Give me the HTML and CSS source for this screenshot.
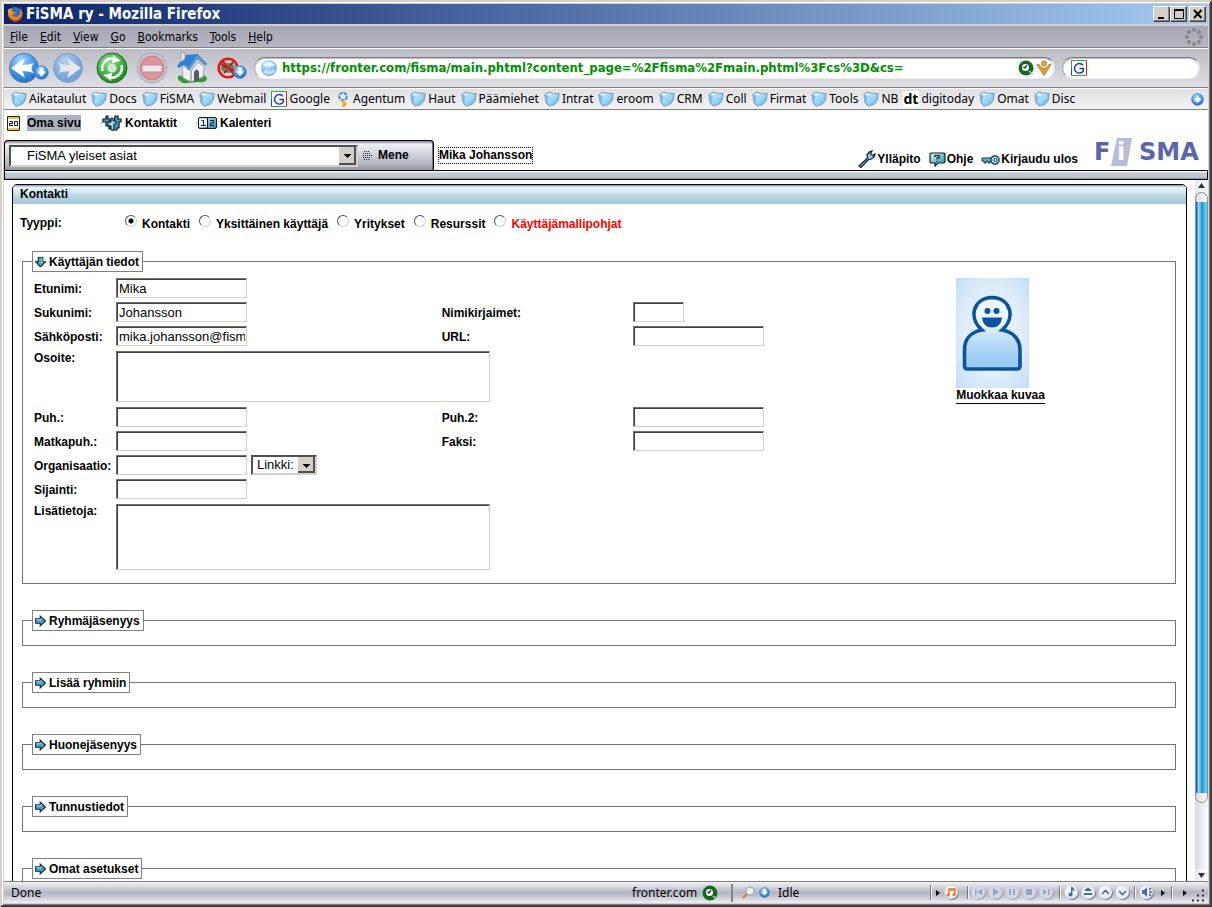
FILE: index.html
```html
<!DOCTYPE html>
<html lang="fi">
<head>
<meta charset="utf-8">
<title>FiSMA ry - Mozilla Firefox</title>
<link rel="stylesheet" href="styles.css">
</head>
<body>
<svg class="defs" aria-hidden="true">
  <defs>
    <radialGradient id="blueBall" cx=".4" cy=".25" r=".85"><stop offset="0" stop-color="#a8dcff"/><stop offset=".5" stop-color="#3f9be8"/><stop offset="1" stop-color="#1c62b8"/></radialGradient>
    <radialGradient id="greenBall" cx=".4" cy=".3" r=".8"><stop offset="0" stop-color="#8fe08a"/><stop offset=".6" stop-color="#35a83c"/><stop offset="1" stop-color="#137a1c"/></radialGradient>
    <linearGradient id="folder" x1="0" y1="0" x2="1" y2="1"><stop offset="0" stop-color="#b4e2fc"/><stop offset=".5" stop-color="#98d8fc"/><stop offset="1" stop-color="#58b0ec"/></linearGradient>
    <linearGradient id="teal" x1="0" y1="0" x2="1" y2="1"><stop offset="0" stop-color="#d8f2f8"/><stop offset="1" stop-color="#2888a8"/></linearGradient>
    <linearGradient id="body" x1="0" y1="0" x2="0" y2="1"><stop offset="0" stop-color="#d4e9fb"/><stop offset=".75" stop-color="#9ccbf3"/><stop offset="1" stop-color="#9ccbf3"/></linearGradient>
    <radialGradient id="photo" r=".7"><stop offset="0" stop-color="#f0f7fe"/><stop offset=".6" stop-color="#deedfb"/><stop offset="1" stop-color="#c0def8"/></radialGradient>
    <symbol id="i-folder" viewBox="0 0 16 16"><path d="M.8 3.500 4.500 1l4 1.200 6.700.3-.7 6.500-3.500 4.500-6 1.700-3-3.500z" fill="#74bdec" stroke="#8797a4" stroke-width=".8"/><path d="M4 5.500 8 4.500l6-.8-1 5-3 4-4.500 1.500-2-3z" fill="url(#folder)"/><path d="M1.500 3.700 4.500 1.700l4 1.200 5.500.3-9 1.800z" fill="#d8eefa"/></symbol>
    <symbol id="i-down" viewBox="0 0 16 16"><circle cx="8" cy="8" r="7.300" fill="url(#blueBall)" stroke="#5283bb" stroke-width=".8"/><path d="M6 3h4v4h3l-5 5.500L3 7h3z" fill="#fff"/></symbol>
    <symbol id="i-right" viewBox="0 0 16 16"><circle cx="8" cy="8" r="7.300" fill="url(#blueBall)" stroke="#5283bb" stroke-width=".8"/><path d="M3 6h4V3l6 5-6 5v-3H3l2-2z" fill="#fff"/></symbol>
    <symbol id="i-g" viewBox="0 0 16 16"><path d="M0 0h16v16H0z" fill="#fff"/><path d="M.5 15.500V.5h15" fill="none" stroke="#2848c8"/><path d="M.5 8V.5H15.500" fill="none" stroke="#38a838"/><path d="M.5 8v7.500" stroke="#2848c8"/><path d="M15.500 1v14.500" stroke="#d82020"/><path d="M1 15.500h14" stroke="#38a838"/><path d="M12 5.200A4.800 4.800 0 1 0 12.300 11V8.500H8.500" fill="none" stroke="#1838a8" stroke-width="1.400"/></symbol>
    <symbol id="i-lock" viewBox="0 0 16 16"><circle cx="8" cy="8" r="7.500" fill="#107018"/><circle cx="7.500" cy="7.500" r="4.200" fill="#e8f4e8" stroke="#083c0c"/><path d="M7 8 9 5M7 8 5.500 7" stroke="#111" stroke-width="1.200"/><path d="m1 3 3-2M11 11l4 3.500" stroke="#c8c8c8" stroke-width="1.600"/></symbol>
    <symbol id="i-arrow" viewBox="0 0 12 12"><path d="M.7 3.500h5V.7L11.300 6l-5.600 5.300V8.500h-5z" fill="#45a9c8" stroke="#102838" stroke-width="1.200"/><path d="M1.500 4.500h5V3" fill="none" stroke="#a4dcec"/></symbol>
    <symbol id="i-ball" viewBox="0 0 16 16"><circle cx="8.800" cy="9" r="7" fill="#777c8e"/><circle cx="7.700" cy="7.700" r="7.200" fill="#e4edf8"/><circle cx="7" cy="6.500" r="5" fill="#f4f8fd"/></symbol>
    <symbol id="i-ballDim" viewBox="0 0 16 16"><circle cx="8.800" cy="9" r="7" fill="#a0a3b0"/><circle cx="7.700" cy="7.700" r="7.200" fill="#d3d7e2"/></symbol>
  </defs>
</svg>

<div class="window">
  <header class="title-bar">
    <svg class="ic16" viewBox="0 0 16 16"><circle cx="8" cy="8" r="7" fill="#356fc0"/><path d="M1 3Q0 12 6 15q8 2 9.500-6Q16 4 13 2q1 3 0 6-2 4-5 3-3-1-2-3l3-1-4-2 0-3Q2 3 1 3z" fill="#f08418"/><path d="M2 9q2 6 8 5 4-2 5-6-1 8-7 8-5-1-6-7z" fill="#c83c10"/><path d="M1.500 3 4 7l-1 2z" fill="#ffd050"/></svg>
    <h1>FiSMA ry - Mozilla Firefox</h1>
    <button class="win-btn" aria-label="Minimize"><svg viewBox="0 0 12 12"><path d="M2 9h6v2H2z"/></svg></button>
    <button class="win-btn" aria-label="Maximize"><svg viewBox="0 0 12 12"><path d="M1.500 2.500h9v8h-9z" fill="none" stroke="#000"/><path d="M1 1h10v2H1z"/></svg></button>
    <button class="win-btn close" aria-label="Close"><svg viewBox="0 0 12 12"><path d="m2 2 7.500 8M9.500 2 2 10" stroke="#000" stroke-width="1.900"/></svg></button>
  </header>
  <nav class="menu-bar">
    <button><u>F</u>ile</button><button><u>E</u>dit</button><button><u>V</u>iew</button><button><u>G</u>o</button><button><u>B</u>ookmarks</button><button><u>T</u>ools</button><button><u>H</u>elp</button>
    <svg class="throbber" viewBox="0 0 18 18" fill="#858588"><circle cx="9" cy="2" r="1.900"/><circle cx="14" cy="4" r="1.900"/><circle cx="16" cy="9" r="1.900"/><circle cx="14" cy="14" r="1.900"/><circle cx="9" cy="16" r="1.900"/><circle cx="4" cy="14" r="1.900"/><circle cx="2" cy="9" r="1.900"/><circle cx="4" cy="4" r="1.900"/></svg>
  </nav>
  <div class="tool-bar">
    <button class="tool back" aria-label="Back"><svg viewBox="0 0 42 32"><circle cx="16" cy="16" r="14.500" fill="url(#blueBall)" stroke="#4c7cb4"/><path d="M3 16 17 6 14.500 13Q20 13 26 11q-5 5 0 10-6-2-11.500-2L17 26z" fill="#fff"/><use href="#i-down" x="26" y="13" width="15" height="15"/></svg></button>
    <button class="tool fwd" aria-label="Forward"><svg viewBox="0 0 32 32" opacity=".55"><circle cx="16" cy="16" r="14.500" fill="url(#blueBall)" stroke="#4c7cb4"/><path d="M29 16 15 6l2.500 7Q12 13 6 11q5 5 0 10 6-2 11.500-2L15 26z" fill="#fff"/></svg></button>
    <button class="tool reload" aria-label="Reload"><svg viewBox="0 0 32 32"><circle cx="16" cy="16" r="15" fill="url(#greenBall)" stroke="#147020"/><g fill="none" stroke="#fff" stroke-width="2.500"><path d="M6.500 19A10 10 0 0 1 18 6.500"/><path d="M25.500 13A10 10 0 0 1 14 25.500"/></g><path d="m17 3 8 6-9 2zM15 29l-8-6 9-2z" fill="#fff"/><circle cx="16" cy="16" r="4.500" fill="#d8e8d8"/></svg></button>
    <button class="tool stop" aria-label="Stop"><svg viewBox="0 0 32 32"><circle cx="16" cy="16" r="15" fill="#c8c8d0" stroke="#a8a8b0"/><circle cx="16" cy="16" r="12" fill="#dc949c" stroke="#c88088"/><path d="M6 13h20v7H6z" fill="#e8e8ec" stroke="#cc868e"/></svg></button>
    <button class="tool home" aria-label="Home"><svg viewBox="0 0 32 32"><path d="M2 27q-1-5 5-3l4 3 4-3 5 3 5-3q5-2 6 3-2 4-8 3l-12 1q-6 1-9-4z" fill="#2e9c34"/><path d="m6 13 9 6v11l-8-4zM15 19l7-9 6 5-1 10-12 5z" fill="#eef0f4" stroke="#8a8e98" stroke-width=".7"/><path d="M18 20q3-5 5 0v8l-5 1z" fill="#555a64"/><path d="m1 14 9-11 12-1L12 15l-5-2-4 3z" fill="#2c82d8"/><path d="m21 2 10 10-2 1-8-7-8 12-2-2z" fill="#4ca0e8" stroke="#1c62ac" stroke-width=".6"/><path d="M5 1h4v6l-4 3z" fill="#e4e6ea" stroke="#888" stroke-width=".6"/></svg></button>
    <button class="tool fly" aria-label="Block"><svg viewBox="0 0 32 32"><ellipse cx="12" cy="16" rx="7" ry="5" fill="#8c7458"/><path d="m5 12 5 4M8 21l3-3M17 10l-3 4M19 19l-4-2" stroke="#46382c" stroke-width="1.500"/><circle cx="12" cy="16" r="9.300" fill="none" stroke="#e01818" stroke-width="2.600"/><path d="m6 9 13 14" stroke="#e01818" stroke-width="2.600"/><use href="#i-down" x="17" y="13" width="14" height="14"/></svg></button>
    <div class="url-box">
      <svg class="ic18" viewBox="0 0 18 18"><circle cx="9" cy="9" r="8" fill="url(#blueBall)" opacity=".6"/><path d="M3 6q6-6 12 0-6 3-12 0z" fill="#eef6ff"/><path d="m3 13 3-3 4 2 4-2 1 3q-6 5-12 0z" fill="#c4dcf4"/></svg>
      <input type="text" aria-label="Address" value="https://fronter.com/fisma/main.phtml?content_page=%2Ffisma%2Fmain.phtml%3Fcs%3D&amp;cs=">
      <svg class="ic16"><use href="#i-lock"/></svg>
      <svg class="ic16" viewBox="0 0 16 16"><circle cx="8" cy="3.500" r="2.600" fill="#e0a838" stroke="#a87414" stroke-width=".7"/><path d="m1 4.500 1.500-.5L6 8h4l3.500-4 1.500.5-4 6.500-3 4.500L5 11z" fill="#dca030" stroke="#a06c10" stroke-width=".7"/></svg>
    </div>
    <div class="search-box"><svg class="ic16"><use href="#i-g"/></svg><input type="text" aria-label="Search"></div>
  </div>
  <nav class="bookmarks">
    <a href="#"><svg><use href="#i-folder"/></svg>Aikataulut</a>
    <a href="#"><svg><use href="#i-folder"/></svg>Docs</a>
    <a href="#"><svg><use href="#i-folder"/></svg>FiSMA</a>
    <a href="#"><svg><use href="#i-folder"/></svg>Webmail</a>
    <a href="#"><svg><use href="#i-g"/></svg>Google</a>
    <a href="#"><svg viewBox="0 0 16 16"><circle cx="8" cy="5.500" r="3.600" fill="#fff" stroke="#4898e0" stroke-width="2.400" stroke-dasharray="3.500 .8"/><path d="M8 9v2q3 1 2 3l-3 1" fill="none" stroke="#e8b020" stroke-width="2.400"/></svg>Agentum</a>
    <a href="#"><svg><use href="#i-folder"/></svg>Haut</a>
    <a href="#"><svg><use href="#i-folder"/></svg>Päämiehet</a>
    <a href="#"><svg><use href="#i-folder"/></svg>Intrat</a>
    <a href="#"><svg><use href="#i-folder"/></svg>eroom</a>
    <a href="#"><svg><use href="#i-folder"/></svg>CRM</a>
    <a href="#"><svg><use href="#i-folder"/></svg>Coll</a>
    <a href="#"><svg><use href="#i-folder"/></svg>Firmat</a>
    <a href="#"><svg><use href="#i-folder"/></svg>Tools</a>
    <a href="#"><svg><use href="#i-folder"/></svg>NB</a>
    <a href="#"><span class="dt">dt</span>digitoday</a>
    <a href="#"><svg><use href="#i-folder"/></svg>Omat</a>
    <a href="#"><svg><use href="#i-folder"/></svg>Disc</a>
    <button class="more" aria-label="More"><svg><use href="#i-right"/></svg></button>
  </nav>

  <div class="page">
    <div class="top-links">
      <a href="#" class="current"><svg width="13" height="15" viewBox="0 0 13 15"><path d="M.5.5h12v14H.5z" fill="#fff" stroke="#222"/><path d="M1 1h11v2H1zM1 12h11v2H1z" fill="#f8c048"/><path d="M2.500 5.500h3v2h-3v2h3.500M7.500 5.500h3v4h-3z" fill="none" stroke="#111"/></svg><span>Oma sivu</span></a>
      <a href="#"><svg width="22" height="16" viewBox="0 0 22 16"><path d="M1 8h1" stroke="#555"/><path d="M6 1h2v3h3v2H9v2l2 1v5H9v-3H6V7H3V4h3zM15 1h3v3h3v3h-2v6h-2v2h-4v-4h-3V7h4z" fill="#4898b8" stroke="#0c1c28" stroke-width="1.200"/><path d="M11 3h2v3h3v3h-2v6h-3v-4H8V7h3z" fill="#98d4e8" stroke="#0c1c28"/></svg><span>Kontaktit</span></a>
      <a href="#"><svg width="21" height="14" viewBox="0 0 21 14"><path d="M0 7h1" stroke="#555"/><rect x="2.500" y="1.500" width="18" height="11" rx="1.500" fill="url(#teal)" stroke="#0c1c28"/><path d="M3 3h8v8H3z" fill="#e8f8fc"/><path d="M11.500 2v10M5.500 4.500h2v5M5 9.500h5M14 4.500h3.500v2.500h-3v2.500H18" fill="none" stroke="#0c1c28"/></svg><span>Kalenteri</span></a>
    </div>
    <div class="head-row">
      <form class="room-tab">
        <select class="room" aria-label="Huone"><option>FiSMA yleiset asiat</option></select>
        <button type="button" class="go"><svg width="10" height="10" viewBox="0 0 10 10"><path d="M1 .5h5M0 2.500h8M0 4.500h10M0 6.500h8M1 8.500h5" stroke="#222" stroke-dasharray="1 1"/></svg>Mene</button>
      </form>
      <a href="#" class="user">Mika Johansson</a>
      <div class="tools">
        <a href="#"><svg width="18" height="18" viewBox="0 0 18 18"><path d="M1 16 9.500 8 9 4.500 12 1.500l2-.5-1.500 2.500 2 2L17 4l-.5 2.500-3 2.500-3 .5L3 17.500z" fill="#8ccce0" stroke="#0c1c28" stroke-width="1.200"/></svg>Ylläpito</a>
        <a href="#"><svg width="17" height="15" viewBox="0 0 17 15"><path d="M2 1h13l1 1v8l-1 1H9l-3 3v-3H2l-1-1V2z" fill="url(#teal)" stroke="#0c1c28" stroke-width="1.200"/><path d="M6 5V3.500h4V6H8v1.500M8 9v1" fill="none" stroke="#0c1c28" stroke-width="1.200"/></svg>Ohje</a>
        <a href="#"><svg width="19" height="13" viewBox="0 0 19 13"><path d="M1 5h10v3H9v2H7V8H5v2H3V8H1z" fill="#68b4cc" stroke="#0c3448"/><circle cx="14" cy="7" r="4.200" fill="#a8d8e8" stroke="#0c3448" stroke-width="1.200"/><circle cx="14.500" cy="7" r="1.500" fill="#fff" stroke="#0c3448"/></svg>Kirjaudu ulos</a>
        <svg class="logo" width="110" height="28" viewBox="0 0 110 28"><path d="M23 0h15l-5 28H17z" fill="#b8bcdc"/><g class="logo-text"><text x="0" y="22">F</text><text x="45" y="22">SMA</text><text x="23" y="22" class="logo-i">i</text></g></svg>
      </div>
    </div>
    <div class="bar"></div>

    <div class="frame">
      <main class="panel">
        <h2>Kontakti</h2>
        <div class="types">
          <span class="types-title">Tyyppi:</span>
          <label><input type="radio" name="type" checked>Kontakti</label>
          <label><input type="radio" name="type">Yksittäinen käyttäjä</label>
          <label><input type="radio" name="type">Yritykset</label>
          <label><input type="radio" name="type">Resurssit</label>
          <label class="red"><input type="radio" name="type">Käyttäjämallipohjat</label>
        </div>
        <fieldset>
          <legend><svg class="turn"><use href="#i-arrow"/></svg>Käyttäjän tiedot</legend>
          <div class="form">
            <label class="c1" for="etunimi">Etunimi:</label><input class="c2" id="etunimi" type="text" value="Mika">
            <label class="c1" for="sukunimi">Sukunimi:</label><input class="c2" id="sukunimi" type="text" value="Johansson">
            <label class="c3" for="nimik">Nimikirjaimet:</label><input class="c4 short" id="nimik" type="text">
            <label class="c1" for="posti">Sähköposti:</label><input class="c2" id="posti" type="text" value="mika.johansson@fisma.fi">
            <label class="c3" for="url">URL:</label><input class="c4" id="url" type="text">
            <label class="c1 top" for="osoite">Osoite:</label><textarea id="osoite" class="small"></textarea>
            <label class="c1" for="puh">Puh.:</label><input class="c2" id="puh" type="text">
            <label class="c3" for="puh2">Puh.2:</label><input class="c4" id="puh2" type="text">
            <label class="c1" for="matka">Matkapuh.:</label><input class="c2" id="matka" type="text">
            <label class="c3" for="faksi">Faksi:</label><input class="c4" id="faksi" type="text">
            <label class="c1" for="org">Organisaatio:</label>
            <div class="c2 pair"><input id="org" type="text"><select class="link-select" aria-label="Linkki"><option>Linkki:</option></select></div>
            <label class="c1" for="sij">Sijainti:</label><input class="c2" id="sij" type="text">
            <label class="c1 top" for="lisa">Lisätietoja:</label><textarea id="lisa" class="large"></textarea>
            <div class="portrait">
              <svg width="73" height="110" viewBox="0 0 73 110"><path d="M0 0h73v110H0z" fill="url(#photo)"/><path d="M26 52C14 54 8.500 62 8.500 72v16q0 3 3 3h49.500q3 0 3-3V72C64 62 58 54 46 52z" fill="url(#body)"/><circle cx="36" cy="37" r="17" fill="#eef6fd"/><path d="M28 50h16v5H28z" fill="#d8ebfb"/><path d="M26 52C14 54 8.500 62 8.500 72v16q0 3 3 3h49.500q3 0 3-3V72C64 62 58 54 46 52 60 40 55 20 36 19.500 17 20 12 40 26 52z" fill="none" stroke="#0a549c" stroke-width="3.600"/><circle cx="31.500" cy="33" r="3" fill="#0a549c"/><circle cx="40.500" cy="33" r="3" fill="#0a549c"/><path d="M26 39.500h20q-1 10-10 10t-10-10z" fill="#0a549c"/></svg>
              <a href="#">Muokkaa kuvaa</a>
            </div>
          </div>
        </fieldset>
        <fieldset><legend><svg><use href="#i-arrow"/></svg>Ryhmäjäsenyys</legend></fieldset>
        <fieldset><legend><svg><use href="#i-arrow"/></svg>Lisää ryhmiin</legend></fieldset>
        <fieldset><legend><svg><use href="#i-arrow"/></svg>Huonejäsenyys</legend></fieldset>
        <fieldset><legend><svg><use href="#i-arrow"/></svg>Tunnustiedot</legend></fieldset>
        <fieldset><legend><svg><use href="#i-arrow"/></svg>Omat asetukset</legend></fieldset>
      </main>
      <div class="scroll">
        <svg class="scroll-btn" viewBox="0 0 13 12"><path d="M6.500 3 10 8H3z" fill="#333"/></svg>
        <div class="thumb"></div>
        <div class="track"></div>
        <svg class="scroll-btn" viewBox="0 0 13 12"><path d="M3 4h7L6.500 9z" fill="#333"/></svg>
      </div>
    </div>
  </div>

  <footer class="status">
    <span class="done">Done</span>
    <span class="host">fronter.com<svg class="ic16"><use href="#i-lock"/></svg></span>
    <span class="idle"><svg width="13" height="13" viewBox="0 0 13 13"><path d="m1 12 4-4" stroke="#e08028" stroke-width="2.200"/><circle cx="8" cy="5" r="4" fill="#e8f2fc" stroke="#9aa4b4"/></svg><svg width="11" height="11"><use href="#i-down"/></svg>Idle</span>
    <svg class="player" width="278" height="22" viewBox="0 0 278 22">
      <g stroke="#77777c"><path d="M.5 3v15M37.500 4v13M129.500 4v13M204.500 4v13M241.500 4v13"/></g>
      <g stroke="#f4f4f6"><path d="M1.500 3v15M38.500 4v13M130.500 4v13M205.500 4v13M242.500 4v13"/></g>
      <path d="m6 8 4 3-4 3zM231 8l4 3-4 3zM253 8l4 3-4 3z"/>
      <g><use href="#i-ball" x="14" y="3" width="15" height="15"/><use href="#i-ballDim" x="41" y="3" width="15" height="15"/><use href="#i-ballDim" x="58" y="3" width="15" height="15"/><use href="#i-ballDim" x="75" y="3" width="15" height="15"/><use href="#i-ballDim" x="92" y="3" width="15" height="15"/><use href="#i-ballDim" x="109" y="3" width="15" height="15"/><use href="#i-ball" x="134" y="3" width="15" height="15"/><use href="#i-ball" x="151" y="3" width="15" height="15"/><use href="#i-ball" x="168" y="3" width="15" height="15"/><use href="#i-ball" x="185" y="3" width="15" height="15"/><use href="#i-ball" x="209" y="3" width="15" height="15"/></g>
      <path d="M19 13V7h6v5M19 8h6" fill="none" stroke="#f07818" stroke-width="1.500"/><circle cx="18" cy="13" r="1.600" fill="#f07818"/><circle cx="24" cy="12.500" r="1.600" fill="#f07818"/>
      <g fill="#98a4c0"><path d="M45 7h1.500v6H45zM52 7v6l-5-3zM63 6l6 4-6 4zM79 7h2v6h-2zM83 7h2v6h-2zM96 7h6v6h-6zM113 7l4 3-4 3zM118 7h1.500v6H118z"/></g>
      <g fill="#4c68a0"><path d="M141 5h1.500l2.500 3-1 1-1.500-1.500V12h-1.500z"/><circle cx="140.500" cy="12.500" r="2"/><path d="m158 5 4 4h-8zM154 11h8v2h-8zM212 8h2l3-3v10l-3-3h-2z"/></g>
      <path d="m172 12 3.500-3.500L179 12M189 9l3.500 3.500L196 9M219 8l2-2M219 10h3M219 12l2 2" fill="none" stroke="#4c68a0" stroke-width="1.600"/>
      <path d="M262 18.500h14M267 13.500h9M272 8.500h4" fill="none" stroke="#333" stroke-width="2" stroke-dasharray="2 3"/>
    </svg>
  </footer>
</div>
</body>
</html>
```
FILE: styles.css
```css
* { box-sizing: border-box; }
html, body { height: 100%; margin: 0; overflow: hidden; }
.defs { position: absolute; width: 0; height: 0; }
a { color: inherit; text-decoration: none; }
button { border: 0; padding: 0; margin: 0; background: none; font: inherit; color: inherit; }
svg { display: block; flex: none; }
.ic16 { width: 16px; height: 16px; }
.ic18 { width: 18px; height: 18px; }

.window {
  height: 100vh;
  display: flex;
  flex-direction: column;
  border: 2px solid;
  border-color: #d4d0c8 #404040 #404040 #d4d0c8;
  padding: 2px;
  background: #d4d0c8;
  box-shadow: inset 1px 1px #fff, inset -1px -1px #808080;
  font: 12px/16px "DejaVu Sans Condensed", "Noto Sans", sans-serif;
  color: #000;
}

.title-bar {
  display: flex;
  align-items: center;
  height: 20px;
  padding: 0 2px 0 3px;
  background: linear-gradient(90deg, #0a246a, #a6caf0);
  color: #fff;
}
.title-bar h1 {
  flex: 1;
  margin: 0 0 0 3px;
  font: bold 15px/18px "DejaVu Sans Condensed", "Noto Sans", sans-serif;
}
.win-btn {
  width: 17px;
  height: 16px;
  background: #d4d0c8;
  border: 1px solid;
  border-color: #fff #404040 #404040 #fff;
  box-shadow: inset -1px -1px #808080;
}
.win-btn svg { width: 12px; height: 12px; margin: 0 auto; }
.close { margin-left: 2px; }

.menu-bar {
  display: flex;
  align-items: center;
  gap: 12px;
  height: 22px;
  margin-top: 2px;
  padding: 0 5px 0 6px;
  background: linear-gradient(#a7a7b4, #b6b6c2);
  border-bottom: 1px solid #808084;
}
.throbber { width: 18px; height: 18px; margin-left: auto; }

.tool-bar {
  display: flex;
  align-items: center;
  height: 40px;
  padding: 0 8px 0 4px;
  border-top: 1px solid #fff;
  border-bottom: 1px solid #808084;
  background: linear-gradient(#bcbcc6, #dedee4);
}
.tool svg { width: 32px; height: 32px; }
.tool.back svg { width: 42px; }
.fwd { margin-left: 2px; }
.reload { margin-left: 12px; }
.stop, .home, .fly { margin-left: 8px; }
.url-box, .search-box {
  display: flex;
  align-items: center;
  height: 22px;
  background: #fff;
  border-radius: 11px;
  border: 1px solid;
  border-color: #7c7c80 #e4e4e8 #f0f0f4 #a8a8ac;
  box-shadow: inset 0 1px 1px #bbb;
}
.url-box { flex: 1; margin-left: 6px; padding: 0 2px 0 5px; gap: 2px; }
.url-box input {
  flex: 1;
  min-width: 0;
  border: 0;
  padding: 0 0 0 2px;
  background: none;
  font: bold 13px/18px "DejaVu Sans Condensed", "DejaVu Sans", sans-serif;
  color: #009000;
  outline: 0;
}
.search-box { width: 138px; margin-left: 7px; padding-left: 8px; }
.search-box input { min-width: 0; flex: 1; border: 0; background: none; }

.bookmarks {
  display: flex;
  align-items: center;
  gap: 5px;
  height: 22px;
  padding: 0 4px 0 7px;
  border-top: 1px solid #fff;
  border-bottom: 1px solid #808084;
  background: linear-gradient(#e0e0e5, #f3f3f5);
  font-family: "Noto Sans", sans-serif;
}
.bookmarks a { display: flex; align-items: center; gap: 2px; white-space: nowrap; }
.bookmarks svg { width: 16px; height: 16px; }
.bookmarks .more { margin-left: auto; }
.bookmarks .more svg { width: 13px; height: 13px; }
.dt { width: 16px; background: #fff; font: bold 14px/16px "Noto Sans", sans-serif; }

.page {
  flex: 1;
  min-height: 0;
  display: flex;
  flex-direction: column;
  background: #fff;
  font: bold 12px/15px "Liberation Sans", Arial, sans-serif;
}
.top-links { display: flex; align-items: center; gap: 19px; height: 26px; padding-left: 3px; }
.top-links a { display: flex; align-items: center; gap: 3px; }
.top-links .current { gap: 7px; }
.top-links span { padding-top: 1px; }
.current span { background: #a9b1bd; }
.head-row { display: flex; height: 34px; align-items: flex-end; }
.room-tab {
  display: flex;
  align-items: center;
  width: 430px;
  height: 30px;
  padding: 0 0 0 4px;
  border: 1px solid #000;
  border-bottom: 0;
  border-radius: 4px 4px 0 0;
  background: linear-gradient(#9099a5 0 1px, #f0f1f3 3px, #c3c6ce 60%, #b0b6be 80%, #8e98a2);
  box-shadow: inset -1px 0 #6c7884;
}
select {
  appearance: none;
  border: 2px solid;
  border-color: #505050 #d4d0c8 #d4d0c8 #505050;
  border-radius: 0;
  font: 13px/16px "Liberation Sans", Arial, sans-serif;
  color: #000;
  background: #fff;
}
.room, .link-select {
  background-image:
    linear-gradient(#000, #000), linear-gradient(#000, #000), linear-gradient(#000, #000), linear-gradient(#000, #000),
    linear-gradient(#d4d0c8, #d4d0c8), linear-gradient(#505050, #505050);
  background-repeat: no-repeat;
  background-size: 7px 1px, 5px 1px, 3px 1px, 1px 1px, 15px calc(100% - 2px), 17px 100%;
  background-position: right 5px top 7px, right 6px top 8px, right 7px top 9px, right 8px top 10px, right 2px top 0, right 0 top 0;
}
.room { width: 349px; height: 22px; padding: 0 0 0 16px; }
.go { display: flex; align-items: center; gap: 5px; margin-left: 5px; }
.user { margin: 0 0 6px 4px; border: 1px dotted #000; line-height: 15px; }
.tools { display: flex; align-items: flex-end; margin-left: auto; padding-right: 4px; gap: 8px; }
.tools a { display: flex; align-items: center; gap: 1px; height: 18px; margin-bottom: 2px; white-space: nowrap; }
.logo { margin: 0 0 4px 8px; }
.logo-text { font: bold 24px "DejaVu Sans", sans-serif; fill: #5866ac; }
.logo-i { fill: #fff; }
.bar {
  height: 10px;
  border: 1px solid #000;
  background: linear-gradient(#f4f6f8 0 1px, #c2c8d0 2px 6px, #84909c);
}

.frame { flex: 1; min-height: 0; display: flex; overflow: hidden; }
.panel {
  flex: 1;
  height: 760px;
  margin: 4px 8px 0 8px;
  border: 1px solid #000;
  border-radius: 5px 5px 0 0;
  overflow: hidden;
}
.panel h2 {
  margin: 0;
  padding: 0 7px;
  height: 19px;
  font-size: 12px;
  line-height: 18px;
  background: linear-gradient(#88aec0 0 1px, #eaf4f8 2px, #dceaf2 6px, #b4d4e2 12px, #a2c8d8);
}
.types { display: flex; align-items: center; height: 38px; gap: 9px; padding-left: 7px; }
.types-title { width: 96px; }
.types label { display: flex; align-items: flex-start; gap: 5px; padding-top: 2px; line-height: 19px; }
.red { color: #f00; }
input[type="radio"] {
  appearance: none;
  width: 12px;
  height: 12px;
  margin: 0;
  border-radius: 50%;
  border: 1px solid;
  border-color: #505050 #d4d0c8 #d4d0c8 #505050;
  background: #fff;
}
input[type="radio"]:checked { background: radial-gradient(circle, #000 2px, #fff 3px); }

fieldset {
  min-height: 36px;
  margin: 9px 10px 26px 9px;
  padding: 0 0 0 9px;
  border: 1px solid #75756f;
}
fieldset + fieldset { margin-top: 0; }
legend {
  display: flex;
  align-items: center;
  gap: 3px;
  height: 21px;
  padding: 1px 3px 0 2px;
  border: 1px solid #808080;
}
legend svg { width: 11px; height: 12px; }
.turn { transform: rotate(90deg); }
.form {
  display: grid;
  grid-template-columns: 82px 326fr 191fr 324fr 219fr;
  row-gap: 4px;
  padding: 6px 0 12px 2px;
}
.c1 { grid-column: 1; }
.c2 { grid-column: 2; }
.c3 { grid-column: 3; }
.c4 { grid-column: 4; }
.form label { height: 20px; line-height: 22px; white-space: nowrap; }
.form label.top { line-height: 16px; }
.form input, textarea {
  width: 131px;
  height: 20px;
  padding: 0 1px 0 2px;
  border: 1px solid;
  border-color: #707070 #d4d0c8 #d4d0c8 #707070;
  border-radius: 0;
  box-shadow: inset 1px 1px #404040;
  font: 13px/18px "Liberation Sans", Arial, sans-serif;
  color: #000;
  background: #fff;
}
.form .short { width: 51px; }
textarea { display: block; grid-column: 2 / 4; width: 374px; margin: 1px 0; resize: none; }
textarea.small { height: 51px; }
textarea.large { height: 66px; }
.pair { display: flex; gap: 4px; }
.link-select { width: 66px; height: 20px; padding: 0 0 0 4px; }
.portrait { grid-column: 5; grid-row: 1 / 6; height: 0; }
.portrait a { display: inline-block; line-height: 15px; border-bottom: 1px solid #000; }

.scroll { width: 13px; display: flex; flex-direction: column; background: linear-gradient(90deg, #d4d8e4, #fbfcfe); }
.scroll-btn { width: 13px; height: 12px; background: linear-gradient(90deg, #e4e8f0, #fff); }
.thumb {
  flex: 609;
  border: 1px solid #8c8c94;
  border-radius: 7px;
  background: linear-gradient(90deg, #1464b4 0 1px, #a4dcf0 2px, #50b0e0 5px, #1c80c4 6px, #48c0e8 8px, #60d0f0) no-repeat 0 9px / 100% calc(100% - 18px), linear-gradient(90deg, #d8d8e0, #fff);
}
.track { flex: 66; }

.status {
  display: flex;
  align-items: center;
  height: 22px;
  padding: 0 0 0 7px;
  border-top: 1px solid #808084;
  background: linear-gradient(#f2f2f5, #b4b5c2 50%, #c0c1cc 65%, #f0f0f3);
  font-family: "Noto Sans", sans-serif;
}
.done { flex: 1; }
.host, .idle { display: flex; align-items: center; gap: 5px; }
.host { width: 99px; }
.idle { width: 199px; height: 18px; gap: 4px; padding-left: 9px; border-left: 2px solid #88857c; }
.idle svg:last-of-type { margin-right: 4px; }
```
